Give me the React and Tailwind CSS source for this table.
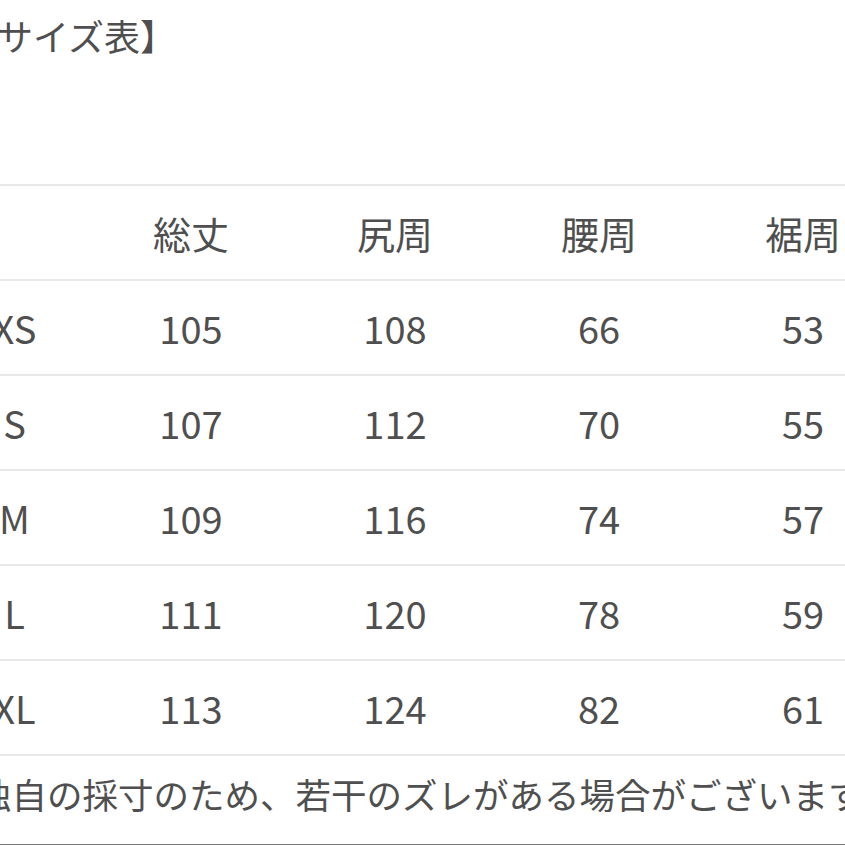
const headers = ["", "総丈", "尻周", "腰周", "裾周"];

const rows = [
  ["XS", "105", "108", "66", "53"],
  ["S", "107", "112", "70", "55"],
  ["M", "109", "116", "74", "57"],
  ["L", "111", "120", "78", "59"],
  ["XL", "113", "124", "82", "61"],
];

const Row = ({ cells }) => (
  <div className="grid grid-cols-[149px_204px_204px_204px_204px] h-[95px] border-b-2 border-[#e8e8e8] items-center">
    {cells.map((c, i) => (
      <div key={i} className="text-center">
        {c}
      </div>
    ))}
  </div>
);

export default function App() {
  return (
    <div
      className="w-[845px] h-[845px] overflow-hidden bg-white text-[#4f4f4f]"
      style={{ fontFamily: '"Noto Sans CJK JP", "Noto Sans", sans-serif' }}
    >
      <h1 className="pt-[17px] ml-[-39px] text-[36px] leading-none font-normal whitespace-nowrap">
        【サイズ表】
      </h1>

      <div className="mt-[131px] ml-[-60px] w-[965px] border-t-2 border-[#e8e8e8] text-[38px] leading-none">
        <Row cells={headers} />
        {rows.map((r) => (
          <Row key={r[0]} cells={r} />
        ))}
      </div>

      <p className="mt-[20px] ml-[-24px] text-[35.5px] leading-none whitespace-nowrap">
        独自の採寸のため、若干のズレがある場合がございます。
      </p>
      <div className="mt-[32px] border-t border-[#7a7a7a]" />
    </div>
  );
}
